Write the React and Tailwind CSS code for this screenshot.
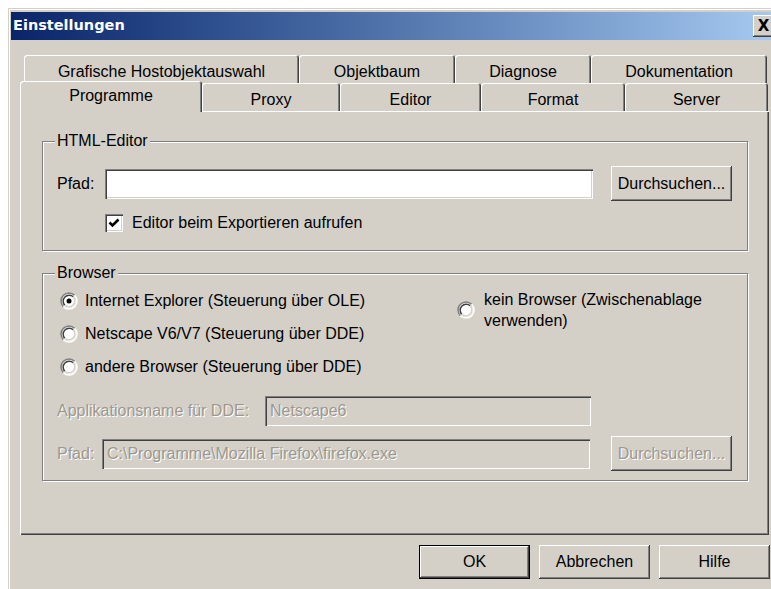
import React from "react";

const raised =
  "shadow-[inset_-1px_-1px_0_#404040,inset_1px_1px_0_#ffffff,inset_-2px_-2px_0_#808080]";
const sunken =
  "shadow-[inset_1px_1px_0_#808080,inset_2px_2px_0_#404040,inset_-1px_-1px_0_#ffffff,inset_-2px_-2px_0_#d4d0c8]";
const dimmed = "text-[#9c988f] [text-shadow:1px_1px_0_#ffffff]";

const Button = ({ children, className = "", disabled }) => (
  <div
    className={`flex items-center justify-center bg-[#d4d0c8] ${raised} ${
      disabled ? dimmed : "text-black"
    } ${className}`}
  >
    {children}
  </div>
);

const Field = ({ value = "", className = "", disabled }) => (
  <div
    className={`flex items-center px-[5px] ${sunken} ${
      disabled ? `bg-[#d4d0c8] ${dimmed}` : "bg-white"
    } ${className}`}
  >
    {value}
  </div>
);

const Tab = ({ label, w, selected }) => (
  <div
    className={`flex justify-center rounded-t-[3px] bg-[#d4d0c8] shadow-[inset_1px_1px_0_#ffffff,inset_-1px_0_0_#404040,inset_-2px_0_0_#808080] ${w} ${
      selected
        ? "relative z-10 -mb-[1px] -mt-[2px] h-[31px] pt-[3px]"
        : "h-[28px] pt-[5px]"
    }`}
  >
    {label}
  </div>
);

const Group = ({ title, className = "", children }) => (
  <div
    className={`relative w-[706px] border border-[#808080] shadow-[inset_1px_1px_0_#ffffff,1px_1px_0_#ffffff] ${className}`}
  >
    <span className="absolute -top-[10px] left-[12px] bg-[#d4d0c8] px-[2px] leading-[18px]">
      {title}
    </span>
    {children}
  </div>
);

const Radio = ({ checked }) => (
  <svg width="18" height="18" viewBox="0 0 18 18" className="shrink-0">
    <circle cx="9" cy="9" r="7" fill="#ffffff" />
    <path d="M3.34 14.66A8 8 0 0 1 14.66 3.34" fill="none" stroke="#808080" strokeWidth="1.5" />
    <path d="M4.76 13.24A6 6 0 0 1 13.24 4.76" fill="none" stroke="#404040" strokeWidth="1.5" />
    <path d="M14.66 3.34A8 8 0 0 1 3.34 14.66" fill="none" stroke="#ffffff" strokeWidth="1.5" />
    <path d="M13.24 4.76A6 6 0 0 1 4.76 13.24" fill="none" stroke="#d4d0c8" strokeWidth="1.5" />
    {checked && <circle cx="9" cy="9" r="2.5" fill="#000000" />}
  </svg>
);

const Checkbox = () => (
  <div className={`flex h-[18px] w-[18px] shrink-0 items-center justify-center bg-white ${sunken}`}>
    <svg width="12" height="12" viewBox="0 0 12 12">
      <path d="M1.5 5.5 L4.5 8.5 L10.5 2.5" fill="none" stroke="#000000" strokeWidth="2.6" />
    </svg>
  </div>
);

export default function App() {
  return (
    <div className="h-[589px] w-[771px] overflow-hidden bg-white font-['Liberation_Sans',Arial,sans-serif] text-[16px] text-black">
      <div className="ml-[8px] mt-[8px] h-[600px] w-[771px] bg-[#d4d0c8] px-[3px] pt-[4px] shadow-[inset_1px_1px_0_#d4d0c8,inset_2px_2px_0_#ffffff]">
        {/* title bar */}
        <div className="flex h-[28px] items-center bg-linear-to-r from-[#0a246a] to-[#a6caf0] pl-[2px] pr-[2px]">
          <span className="font-['DejaVu_Sans',sans-serif] text-[14.5px] font-bold text-white">
            Einstellungen
          </span>
          <div
            className={`ml-auto flex h-[22px] w-[21px] items-center justify-center bg-[#d4d0c8] font-['DejaVu_Sans',sans-serif] text-[15px] font-bold ${raised}`}
          >
            X
          </div>
        </div>

        <div className="ml-[9px] mt-[15px] w-[749px]">
          {/* tabs */}
          <div className="ml-[4px] flex">
            <Tab label="Grafische Hostobjektauswahl" w="w-[275px]" />
            <Tab label="Objektbaum" w="w-[156px]" />
            <Tab label="Diagnose" w="w-[136px]" />
            <Tab label="Dokumentation" w="w-[176px]" />
          </div>
          <div className="flex items-start">
            <Tab label="Programme" w="w-[182px]" selected />
            <Tab label="Proxy" w="w-[138px]" />
            <Tab label="Editor" w="w-[141px]" />
            <Tab label="Format" w="w-[144px]" />
            <Tab label="Server" w="w-[143px]" />
          </div>

          {/* page */}
          <div
            className="h-[424px] w-[749px] px-[22px] pt-[30px] shadow-[inset_1px_1px_0_#ffffff,inset_-1px_-1px_0_#404040,inset_-2px_-2px_0_#808080]"
          >
            <Group title="HTML-Editor" className="h-[110px] pl-[14px] pt-[24px]">
              <div className="flex h-[35px] items-center">
                <span className="w-[48px]">Pfad:</span>
                <Field className="h-[30px] w-[488px]" />
                <Button className="ml-[18px] h-[35px] w-[121px]">Durchsuchen...</Button>
              </div>
              <div className="ml-[48px] mt-[13px] flex h-[18px] items-center gap-[9px]">
                <Checkbox />
                <span>Editor beim Exportieren aufrufen</span>
              </div>
            </Group>

            <Group title="Browser" className="mt-[22px] h-[208px] pl-[14px] pt-[17px]">
              <div className="flex">
                <div className="ml-[3px] flex w-[397px] flex-col gap-[13px]">
                  <label className="flex h-[20px] items-center gap-[7px]">
                    <Radio checked />
                    Internet Explorer (Steuerung über OLE)
                  </label>
                  <label className="flex h-[20px] items-center gap-[7px]">
                    <Radio />
                    Netscape V6/V7 (Steuerung über DDE)
                  </label>
                  <label className="flex h-[20px] items-center gap-[7px]">
                    <Radio />
                    andere Browser (Steuerung über DDE)
                  </label>
                </div>
                <label className="-mt-[2px] flex h-[42px] items-center gap-[9px] leading-[21px]">
                  <Radio />
                  <span>
                    kein Browser (Zwischenablage
                    <br />
                    verwenden)
                  </span>
                </label>
              </div>

              <div className="mt-[19px] flex h-[30px] items-center">
                <span className={`w-[208px] ${dimmed}`}>Applikationsname für DDE:</span>
                <Field value="Netscape6" disabled className="h-[30px] w-[326px]" />
              </div>
              <div className="mt-[10px] flex h-[35px] items-center">
                <span className={`w-[45px] ${dimmed}`}>Pfad:</span>
                <Field
                  value="C:\Programme\Mozilla Firefox\firefox.exe"
                  disabled
                  className="h-[30px] w-[488px]"
                />
                <Button disabled className="ml-[21px] h-[35px] w-[121px]">
                  Durchsuchen...
                </Button>
              </div>
            </Group>
          </div>
        </div>

        {/* dialog buttons */}
        <div className="ml-[408px] mt-[10px] flex gap-[9px]">
          <div className="h-[34px] w-[111px] border border-black">
            <Button className="h-full w-full">OK</Button>
          </div>
          <Button className="h-[34px] w-[111px]">Abbrechen</Button>
          <Button className="h-[34px] w-[111px]">Hilfe</Button>
        </div>
      </div>
    </div>
  );
}
